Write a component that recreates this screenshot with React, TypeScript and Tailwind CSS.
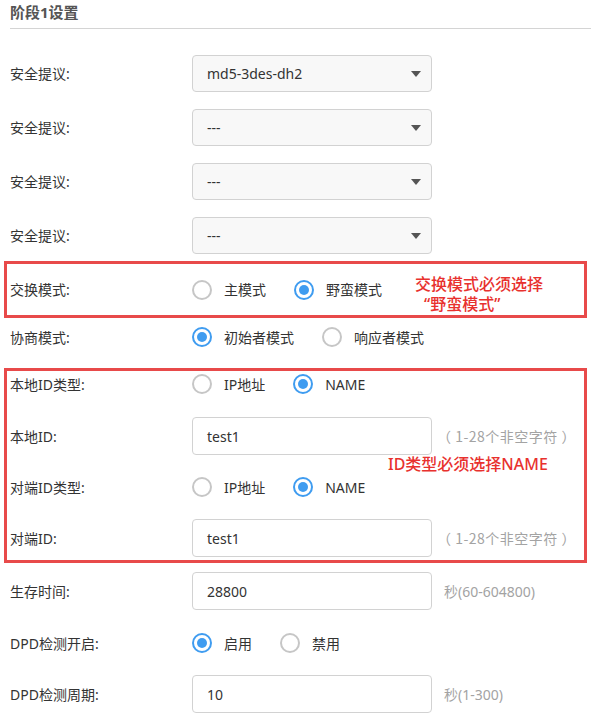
import React from 'react';

const FONT = "font-['Noto_Sans','Noto_Sans_CJK_SC',sans-serif]";

interface Option {
    label: string;
    checked?: boolean;
}

const Radio: React.FC<Option> = ({ label, checked }) => (
    <div className="flex items-center mr-[28px]">
        {checked ? (
            <span className="w-[20px] h-[20px] rounded-full border-2 border-[#3f9cf0] bg-white flex items-center justify-center">
                <span className="w-[10px] h-[10px] rounded-full bg-[#3f9cf0]" />
            </span>
        ) : (
            <span className="w-[20px] h-[20px] rounded-full border-2 border-[#c6c6c6] bg-white" />
        )}
        <span className="ml-[12px] text-[14px] text-[#333]">{label}</span>
    </div>
);

const Label: React.FC<{ text: string }> = ({ text }) => (
    <div className="w-[182px] shrink-0 text-[14px] text-[#333]">{text}</div>
);

const SelectRow: React.FC<{ value: string }> = ({ value }) => (
    <div className="flex items-center h-[37px] pl-[10px]">
        <Label text="安全提议:" />
        <div className="w-[240px] h-[37px] rounded-[4px] border border-[#d2d2d2] bg-[#f8f8f8] flex items-center justify-between pl-[14px] pr-[10px]">
            <span className="text-[14px] text-[#333]">{value}</span>
            <svg width="10" height="6" viewBox="0 0 10 6">
                <path d="M0 0h10L5 6z" fill="#555" />
            </svg>
        </div>
    </div>
);

const RadioRow: React.FC<{ label: string; options: Option[]; pad?: string }> = ({ label, options, pad = 'pl-[10px]' }) => (
    <div className={`flex items-center h-[26px] ${pad}`}>
        <Label text={label} />
        {options.map((o) => (
            <Radio key={o.label} {...o} />
        ))}
    </div>
);

const InputRow: React.FC<{ label: string; value: string; hint: string; pad?: string; cjkHint?: boolean }> = ({
    label,
    value,
    hint,
    pad = 'pl-[10px]',
    cjkHint,
}) => (
    <div className={`flex items-center h-[38px] ${pad}`}>
        <Label text={label} />
        <div className="w-[240px] h-[38px] rounded-[4px] border border-[#d2d2d2] bg-white flex items-center pl-[14px]">
            <span className="text-[14px] text-[#333]">{value}</span>
        </div>
        <span
            className={`text-[14px] text-[#a3a3a3] ${
                cjkHint ? "ml-[5px] tracking-[0.5px] font-['Noto_Sans_CJK_SC',sans-serif]" : 'ml-[12px]'
            }`}
        >
            {hint}
        </span>
    </div>
);

const App: React.FC = () => {
    return (
        <div className={`w-[591px] h-[713px] overflow-hidden bg-white ${FONT}`}>
            <div className="ml-[10px] h-[29px] border-b border-[#d4d4d4] flex items-center">
                <span className="text-[15px] font-bold text-[#555] -mt-[4px]">阶段1设置</span>
            </div>

            <div className="mt-[26px] flex flex-col gap-[17px]">
                <SelectRow value="md5-3des-dh2" />
                <SelectRow value="---" />
                <SelectRow value="---" />
                <SelectRow value="---" />
            </div>

            <div className="relative mx-[4px] mt-[7px] h-[57px] border-[3px] border-[#e84a4a] flex items-center">
                <RadioRow
                    label="交换模式:"
                    pad="pl-[3px]"
                    options={[{ label: '主模式' }, { label: '野蛮模式', checked: true }]}
                />
                <div className="absolute left-[408px] top-[10px] text-[16px] leading-[20px] font-medium text-[#e8312e]">
                    <div>交换模式必须选择</div>
                    <div className="pl-[9px]">“野蛮模式”</div>
                </div>
            </div>

            <div className="mt-[6px]">
                <RadioRow
                    label="协商模式:"
                    options={[{ label: '初始者模式', checked: true }, { label: '响应者模式' }]}
                />
            </div>

            <div className="relative mx-[4px] mt-[18px] h-[195px] border-[3px] border-[#e84a4a] flex flex-col">
                <RadioRow
                    label="本地ID类型:"
                    pad="pl-[3px]"
                    options={[{ label: 'IP地址' }, { label: 'NAME', checked: true }]}
                />
                <div className="mt-[20px]">
                    <InputRow label="本地ID:" value="test1" hint="（ 1-28个非空字符 ）" pad="pl-[3px]" cjkHint />
                </div>
                <div className="mt-[19px]">
                    <RadioRow
                        label="对端ID类型:"
                        pad="pl-[3px]"
                        options={[{ label: 'IP地址' }, { label: 'NAME', checked: true }]}
                    />
                </div>
                <div className="mt-[19px]">
                    <InputRow label="对端ID:" value="test1" hint="（ 1-28个非空字符 ）" pad="pl-[3px]" cjkHint />
                </div>
                <div className="absolute left-[381px] top-[83px] text-[16px] leading-[20px] font-medium text-[#e8312e]">
                    ID类型必须选择NAME
                </div>
            </div>

            <div className="mt-[9px]">
                <InputRow label="生存时间:" value="28800" hint="秒(60-604800)" />
            </div>
            <div className="mt-[20px]">
                <RadioRow label="DPD检测开启:" options={[{ label: '启用', checked: true }, { label: '禁用' }]} />
            </div>
            <div className="mt-[19px]">
                <InputRow label="DPD检测周期:" value="10" hint="秒(1-300)" />
            </div>
        </div>
    );
};

export default App;
